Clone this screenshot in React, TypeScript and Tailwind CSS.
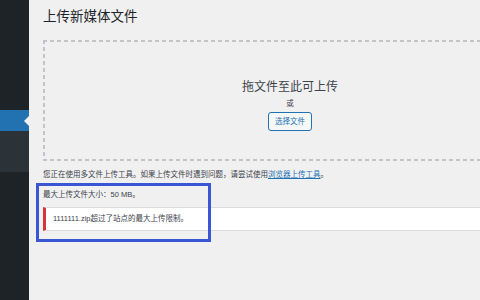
export default function App() {
  return (
    <div className="relative flex h-[300px] w-[480px] overflow-hidden bg-[#f0f0f1] font-['Liberation_Sans','Noto_Sans_CJK_SC',sans-serif] text-[#3c434a]">
      {/* admin menu */}
      <aside className="flex w-[29px] shrink-0 flex-col bg-[#1d2327]">
        <div className="h-[110px]" />
        <div className="relative h-[21px] bg-[#2271b1]">
          <span className="absolute right-0 top-1/2 h-0 w-0 -translate-y-1/2 border-y-[5px] border-r-[5px] border-y-transparent border-r-[#f0f0f1]" />
        </div>
        <div className="h-[41px] bg-[#2c3338]" />
      </aside>

      <main className="min-w-0 flex-1 pl-[14px]">
        <h1 className="pt-[8px] text-[13.5px] leading-[18px] text-[#1d2327]">上传新媒体文件</h1>

        {/* drop zone, dashes drawn with gradients for a tighter pattern */}
        <div className="mt-[14px] flex h-[121px] w-[494px] flex-col items-center bg-no-repeat pt-[39px] [background-image:repeating-linear-gradient(90deg,#c3c4c7_0_4px,transparent_4px_7px),repeating-linear-gradient(90deg,#c3c4c7_0_4px,transparent_4px_7px),repeating-linear-gradient(180deg,#c3c4c7_0_4px,transparent_4px_7px),repeating-linear-gradient(180deg,#c3c4c7_0_4px,transparent_4px_7px)] [background-position:0_0,0_100%,0_0,100%_0] [background-size:100%_2px,100%_2px,2px_100%,2px_100%]">
          <p className="text-[12px] leading-[16px] text-[#3c434a]">拖文件至此可上传</p>
          <p className="mt-[4px] text-[7.5px] leading-[10px]">或</p>
          <button className="mt-[3px] h-[19px] w-[44px] rounded-[3px] border border-[#2271b1] bg-[#f6f7f7] text-[7.5px] leading-[10px] text-[#2271b1]">
            选择文件
          </button>
        </div>

        <p className="mt-[9px] whitespace-nowrap text-[7.5px] leading-[10px]">
          您正在使用多文件上传工具。如果上传文件时遇到问题，请尝试使用
          <a className="text-[#2271b1] underline">浏览器上传工具</a>。
        </p>

        <p className="mt-[10px] text-[7.5px] leading-[10px]">最大上传文件大小：50 MB。</p>

        <div className="mt-[7px] flex h-[24px] w-[500px] items-center border-y border-l-[3px] border-y-[#dcdcde] border-l-[#d63638] bg-white pl-[7px]">
          <p className="text-[7.5px] leading-[10px]">1111111.zip超过了站点的最大上传限制。</p>
        </div>
      </main>

      {/* highlight annotation */}
      <div className="pointer-events-none absolute left-[36px] top-[183px] h-[59px] w-[175px] border-[3px] border-[#3a56d4]" />
    </div>
  );
}
